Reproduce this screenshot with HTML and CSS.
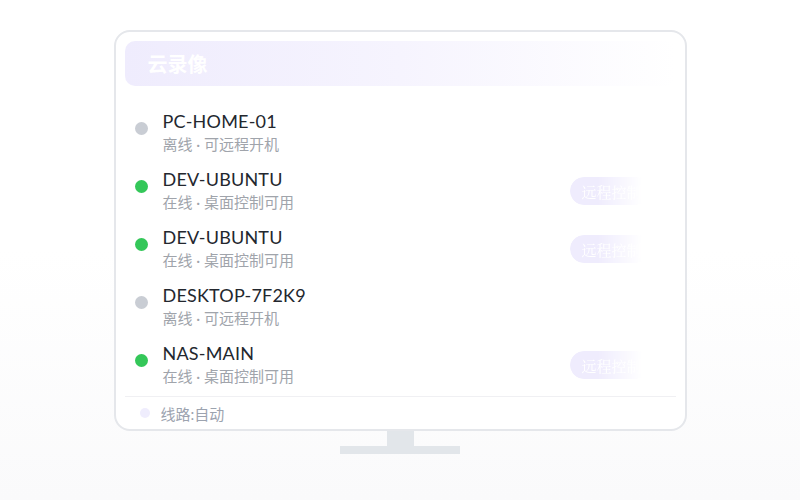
FILE: index.html
```html
<!DOCTYPE html>
<html>
<head>
    <title>云录像</title>
    <meta name="viewport" content="width=device-width, initial-scale=1.0">
    <link rel="stylesheet" href="styles.css">
</head>
<body>
<div class="monitor">
    <div class="screen">
        <div class="header">
            <span class="title">云录像</span>
        </div>
        <div class="list">
            <div class="row">
                <span class="dot off"></span>
                <div class="info">
                    <div class="name">PC-HOME-01</div>
                    <div class="sub">离线 · 可远程开机</div>
                </div>
            </div>
            <div class="row">
                <span class="dot on"></span>
                <div class="info">
                    <div class="name">DEV-UBUNTU</div>
                    <div class="sub">在线 · 桌面控制可用</div>
                </div>
                <button class="remote">远程控制</button>
            </div>
            <div class="row">
                <span class="dot on"></span>
                <div class="info">
                    <div class="name">DEV-UBUNTU</div>
                    <div class="sub">在线 · 桌面控制可用</div>
                </div>
                <button class="remote">远程控制</button>
            </div>
            <div class="row">
                <span class="dot off"></span>
                <div class="info">
                    <div class="name">DESKTOP-7F2K9</div>
                    <div class="sub">离线 · 可远程开机</div>
                </div>
            </div>
            <div class="row">
                <span class="dot on"></span>
                <div class="info">
                    <div class="name">NAS-MAIN</div>
                    <div class="sub">在线 · 桌面控制可用</div>
                </div>
                <button class="remote">远程控制</button>
            </div>
        </div>
        <div class="footer">
            <span class="line-dot"></span>
            <span class="line-text">线路:自动</span>
        </div>
    </div>
    <div class="neck"></div>
    <div class="base"></div>
</div>
</body>
</html>
```

FILE: styles.css
```css
html, body {
    margin: 0;
    height: 100%;
    font-family: Lato, "Noto Sans CJK SC", sans-serif;
}
body {
    background: linear-gradient(to bottom, #ffffff 50%, #fafafb 100%);
    display: flex;
    justify-content: center;
}
.monitor {
    margin-top: 30px;
    width: 573px;
    display: flex;
    flex-direction: column;
    align-items: center;
}
.screen {
    box-sizing: border-box;
    width: 573px;
    height: 401px;
    border: 2px solid #e5e7eb;
    border-radius: 16px;
    padding: 9px 9px 0;
    background-color: #fff;
    display: flex;
    flex-direction: column;
}
.header {
    height: 45px;
    flex-shrink: 0;
    border-radius: 10px;
    background: linear-gradient(to right, #efecfd 0%, #f6f4fe 50%, #ffffff 100%);
    display: flex;
    align-items: center;
    padding-left: 23px;
}
.title {
    color: #fff;
    font-family: "Noto Sans CJK SC", sans-serif;
    font-size: 20px;
    font-weight: bold;
}
.list {
    margin-top: 17px;
}
.row {
    height: 58px;
    display: flex;
    align-items: center;
    padding-left: 10px;
    padding-right: 26px;
}
.dot {
    width: 13px;
    height: 13px;
    flex-shrink: 0;
    border-radius: 50%;
    margin-right: 15px;
    margin-top: -8px;
}
.dot.off {
    background-color: #c9cdd4;
}
.dot.on {
    background-color: #34c759;
}
.info {
    flex: 1;
}
.name {
    font-size: 18px;
    line-height: 24px;
    color: #23272e;
    letter-spacing: 0.2px;
}
.sub {
    font-size: 15px;
    line-height: 22px;
    color: #a0a4ab;
}
.remote {
    width: 80px;
    height: 28px;
    border: none;
    border-radius: 14px;
    background-color: #efecfd;
    color: #fff;
    font-family: "Noto Serif CJK SC", "AR PL UMing CN", serif;
    font-size: 15px;
    text-align: left;
    padding: 0 0 0 12px;
    margin-top: 2px;
    -webkit-mask-image: linear-gradient(to right, #000 35%, transparent 90%);
    mask-image: linear-gradient(to right, #000 35%, transparent 90%);
}
.footer {
    margin-top: 3px;
    border-top: 1px solid #f0f0f3;
    flex: 1;
    display: flex;
    align-items: center;
    padding-left: 15px;
}
.line-dot {
    width: 10px;
    height: 10px;
    border-radius: 50%;
    background-color: #efedfd;
    margin-right: 11px;
}
.line-text {
    font-size: 15px;
    color: #9ca3af;
}
.neck {
    width: 27px;
    height: 15px;
    background-color: #e2e6ea;
}
.base {
    width: 120px;
    height: 8px;
    background-color: #e2e6ea;
}
```
